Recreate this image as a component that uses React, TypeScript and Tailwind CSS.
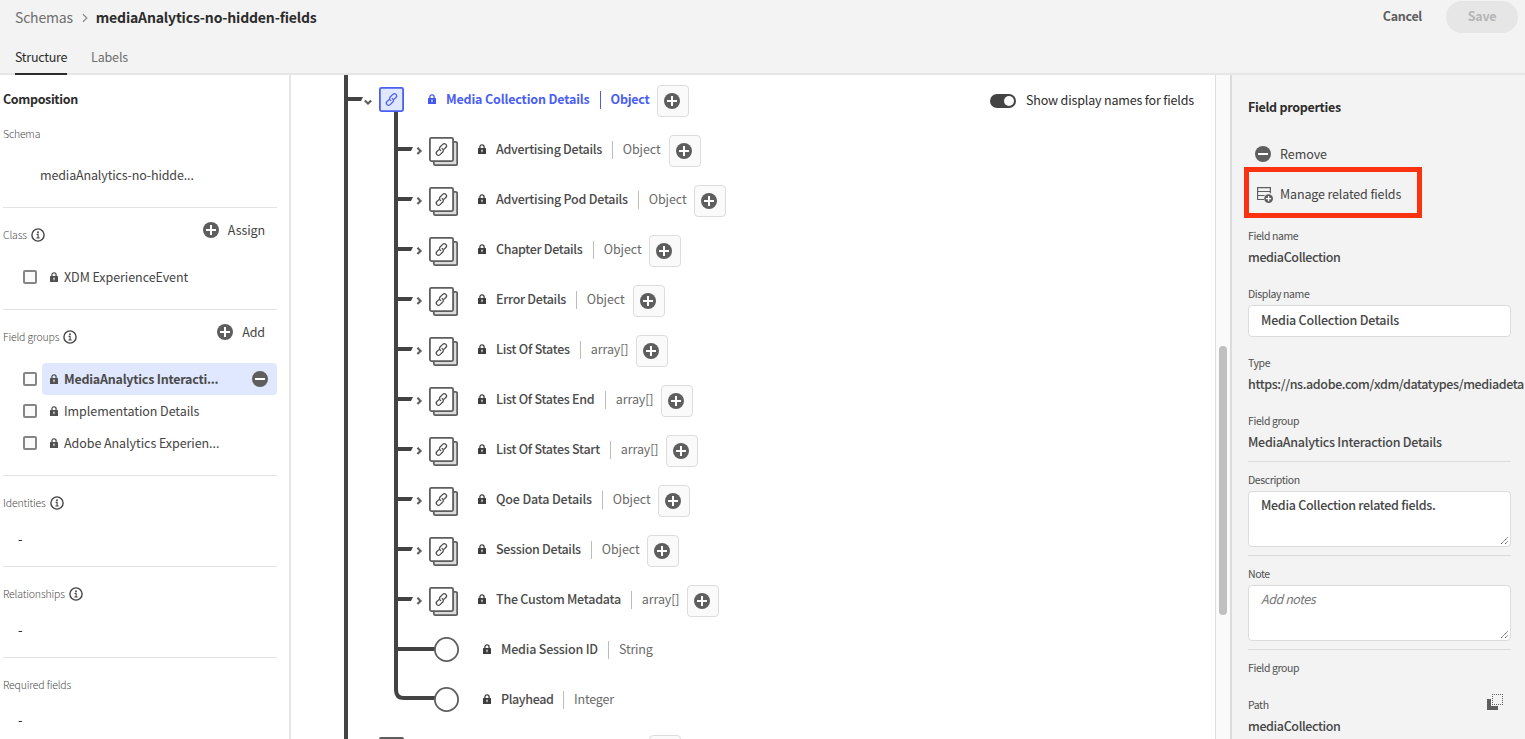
import type { ReactNode } from "react";

type NodeRow = { name: string; type: string; nameWidth: string; typeWidth: string; tracking: string };

const objectRows: NodeRow[] = [
  { name: "Advertising Details", type: "Object", nameWidth: "w-[116px]", typeWidth: "w-[57px]", tracking: "tracking-[-0.29px]" },
  { name: "Advertising Pod Details", type: "Object", nameWidth: "w-[142px]", typeWidth: "w-[56px]", tracking: "tracking-[-0.25px]" },
  { name: "Chapter Details", type: "Object", nameWidth: "w-[97px]", typeWidth: "w-[56px]", tracking: "tracking-[-0.32px]" },
  { name: "Error Details", type: "Object", nameWidth: "w-[80px]", typeWidth: "w-[57px]", tracking: "tracking-[-0.31px]" },
  { name: "List Of States", type: "array[]", nameWidth: "w-[84px]", typeWidth: "w-[56px]", tracking: "tracking-[-0.25px]" },
  { name: "List Of States End", type: "array[]", nameWidth: "w-[109px]", typeWidth: "w-[56px]", tracking: "tracking-[-0.27px]" },
  { name: "List Of States Start", type: "array[]", nameWidth: "w-[114px]", typeWidth: "w-[56px]", tracking: "tracking-[-0.27px]" },
  { name: "Qoe Data Details", type: "Object", nameWidth: "w-[106px]", typeWidth: "w-[56px]", tracking: "tracking-[-0.15px]" },
  { name: "Session Details", type: "Object", nameWidth: "w-[95px]", typeWidth: "w-[56px]", tracking: "tracking-[-0.31px]" },
  { name: "The Custom Metadata", type: "array[]", nameWidth: "w-[135px]", typeWidth: "w-[56px]", tracking: "tracking-[-0.25px]" },
];

const leafRows = [
  { name: "Media Session ID", type: "String", nameWidth: "w-[107px]", tracking: "tracking-[-0.2px]", last: false },
  { name: "Playhead", type: "Integer", nameWidth: "w-[62px]", tracking: "tracking-[-0.38px]", last: true },
];

function Lock({ className = "" }: { className?: string }) {
  return (
    <svg className={`h-[10px] w-[8px] shrink-0 ${className}`} viewBox="0 0 8 10">
      <path d="M1.9 4.5V2.9a2.1 2.1 0 0 1 4.2 0v1.6" fill="none" stroke="currentColor" strokeWidth="1.3" />
      <rect x="0" y="4" width="8" height="6" rx="0.6" fill="currentColor" />
      <path d="M4 5.4a.8.8 0 0 1 .45 1.45V8.2h-.9V6.85A.8.8 0 0 1 4 5.4z" fill="#fff" />
    </svg>
  );
}

function PlusCircle() {
  return (
    <svg className="h-4 w-4 shrink-0" viewBox="0 0 16 16">
      <circle cx="8" cy="8" r="8" fill="#5e5e5e" />
      <path d="M8 3v10M3 8h10" stroke="#fff" strokeWidth="2" />
    </svg>
  );
}

function MinusCircle() {
  return (
    <svg className="h-4 w-4 shrink-0" viewBox="0 0 16 16">
      <circle cx="8" cy="8" r="8" fill="#5e5e5e" />
      <path d="M3 8h10" stroke="#fff" strokeWidth="2" />
    </svg>
  );
}

function Info() {
  return (
    <svg className="h-[14px] w-[14px] shrink-0" viewBox="0 0 14 14">
      <circle cx="7" cy="7" r="6.1" fill="none" stroke="#444" strokeWidth="1.4" />
      <circle cx="7" cy="4.3" r="0.95" fill="#444" />
      <path d="M5.6 6.4h1.5v3.4M5.4 10h3.3" fill="none" stroke="#444" strokeWidth="1.1" />
    </svg>
  );
}

/* Chain glyph centred on (x, y) inside a tree icon. */
function Chain({ x, y, color }: { x: number; y: number; color: string }) {
  return (
    <g transform={`translate(${x} ${y}) rotate(-45)`} fill="none" stroke={color} strokeWidth="1.25" strokeLinecap="round">
      <path d="M-1.6 -2.2H-4.4a2.2 2.2 0 0 0 0 4.4H-0.6a2.2 2.2 0 0 0 2-2.9" transform="translate(-0.2 0.5)" />
      <path d="M1.6 2.2H4.4a2.2 2.2 0 0 0 0-4.4H0.6a2.2 2.2 0 0 0-2 2.9" transform="translate(0.2 -0.5)" />
    </g>
  );
}

function AddButton() {
  return (
    <button className="mt-[2px] flex h-8 w-8 shrink-0 items-center rounded-[4px] border border-[#dcdcdc] bg-[#fafafa] pl-[6px]">
      <PlusCircle />
    </button>
  );
}

function Checkbox() {
  return <span className="h-[14px] w-[14px] shrink-0 rounded-[2px] border-2 border-[#868686] bg-[#fafafa]" />;
}

function ObjectNode({ row }: { row: NodeRow }) {
  return (
    <div className="flex h-[50px] items-center">
      <svg className="h-[50px] w-[64px] shrink-0" viewBox="0 0 64 50">
        <path d="M0 0h4v50H0z" fill="#434343" />
        <path d="M4 22h15l-2 4H4z" fill="#434343" />
        <path d="M23.4 22.7l3.2 3.2-3.2 3.2" fill="none" stroke="#5e5e5e" strokeWidth="2.1" />
        <rect x="39.8" y="16.8" width="23.4" height="23.4" rx="1.5" fill="#dcdcdc" stroke="#5e5e5e" strokeWidth="1.8" />
        <rect x="35.9" y="12.9" width="23.2" height="23.2" rx="1.5" fill="#fff" stroke="#5e5e5e" strokeWidth="1.8" />
        <Chain x={47.4} y={24.5} color="#4b4b4b" />
      </svg>
      <Lock className="mb-[2px] ml-5 text-[#3c3c3c]" />
      <span className={`ml-[10px] mb-[3px] shrink-0 font-medium text-[#4b4b4b] ${row.nameWidth} ${row.tracking}`}>{row.name}</span>
      <span className={`flex h-[18px] shrink-0 items-center border-l border-[#bcbcbc] pl-[9.8px] text-[#6a6a6a] tracking-[-0.1px] ${row.typeWidth}`}>
        <span className="mb-[3px]">{row.type}</span>
      </span>
      <AddButton />
    </div>
  );
}

function LeafNode({ row }: { row: (typeof leafRows)[number] }) {
  return (
    <div className="flex h-[50px] items-center">
      <svg className="h-[50px] w-[66px] shrink-0" viewBox="0 0 66 50">
        {row.last ? (
          <path d="M2 0v15q0 8 8 8h31" fill="none" stroke="#434343" strokeWidth="4" />
        ) : (
          <path d="M2 0v50M2 24h39" fill="none" stroke="#434343" strokeWidth="4" />
        )}
        <circle cx="52.5" cy="24.5" r="11.6" fill="#fff" stroke="#5e5e5e" strokeWidth="1.8" />
      </svg>
      <Lock className="mb-[2px] ml-[23px] text-[#3c3c3c]" />
      <span className={`mb-[3px] ml-[10px] shrink-0 font-medium text-[#4b4b4b] ${row.nameWidth} ${row.tracking}`}>{row.name}</span>
      <span className="flex h-[18px] items-center border-l border-[#bcbcbc] pl-[10px] tracking-[-0.2px] text-[#6a6a6a]">
        <span className="mb-[3px]">{row.type}</span>
      </span>
    </div>
  );
}

function Section({ title, info, action, children }: { title: string; info?: boolean; action?: string; children: ReactNode }) {
  return (
    <section className="border-t border-[#e3e3e3]">
      <div className="flex h-[53px] items-center justify-between pr-3">
        <h3 className="flex items-center gap-[4px] text-[10.5px] font-light tracking-[-0.16px] text-[#4b4b4b]">
          {title}
          {info && <Info />}
        </h3>
        {action && (
          <button className="mb-[10px] flex items-center gap-[9px] tracking-[-0.1px] text-[#444]">
            <PlusCircle />
            {action}
          </button>
        )}
      </div>
      {children}
    </section>
  );
}

function CompositionItem({ name, selected }: { name: string; selected?: boolean }) {
  return (
    <div className="flex h-8 items-center pl-5">
      <Checkbox />
      <div
        className={
          selected
            ? "ml-[5px] flex h-8 flex-1 items-center gap-[6px] rounded-[4px] bg-[#e0e8ff] pl-2 pr-[9px] font-bold tracking-[-0.24px] text-[#4b4b4b]"
            : "ml-[5px] flex h-8 flex-1 items-center gap-[6px] pl-2 tracking-[-0.06px] text-[#444]"
        }
      >
        <Lock className="text-[#505050]" />
        <span className="mb-px flex-1">{name}</span>
        {selected && <MinusCircle />}
      </div>
    </div>
  );
}

const label = "block text-[10.5px] leading-4 tracking-[-0.4px] text-[#505050]";
const value = "block whitespace-nowrap font-medium leading-5 text-[#464646]";

function Grip() {
  return (
    <svg className="h-[9px] w-[9px]" viewBox="0 0 9 9">
      <path d="M1 8l7-7M5 8l3-3" stroke="#555" strokeWidth="1" strokeDasharray="1.4 0.5" />
    </svg>
  );
}

export default function App() {
  return (
    <div className="flex h-[739px] w-[1525px] flex-col overflow-hidden bg-white font-['Noto_Sans_CJK_SC','Open_Sans',sans-serif] text-[12.5px] leading-5 text-[#2c2c2c]">
      <header className="flex h-[75px] shrink-0 flex-col border-b-2 border-[#e6e6e6] bg-[#f3f3f3]">
        <div className="flex h-[34px] shrink-0 items-center pl-[15px] pr-[7px] text-[14px]">
          <span className="tracking-[-0.2px] text-[#6e6e6e]">Schemas</span>
          <svg className="ml-[9px] mr-2 mt-[2px] h-[10px] w-[6px]" viewBox="0 0 6 10">
            <path d="M1 1.2L4.8 5 1 8.8" fill="none" stroke="#8e8e8e" strokeWidth="1.3" />
          </svg>
          <h1 className="flex-1 font-bold tracking-[-0.17px]">mediaAnalytics-no-hidden-fields</h1>
          <button className="mb-[2px] text-[12.5px] font-bold tracking-[-0.3px] text-[#5e5e5e]">Cancel</button>
          <button className="ml-6 flex h-8 w-[72px] items-center justify-center rounded-full bg-[#e6e6e6] pb-[2px] text-[12.5px] font-bold tracking-[-0.3px] text-[#b5b5b5]">
            Save
          </button>
        </div>
        <nav className="flex h-[41px] shrink-0 gap-6 pl-[15px]">
          <span className="z-10 h-[41px] w-[52px] border-b-2 border-[#2c2c2c] pt-[13px] tracking-[-0.25px] text-[#2c2c2c]">Structure</span>
          <span className="pt-[13px] tracking-[-0.15px] text-[#6e6e6e]">Labels</span>
        </nav>
      </header>

      <div className="flex min-h-0 flex-1">
        <aside className="w-[291px] shrink-0 overflow-hidden border-r-2 border-[#e6e6e6] pl-[3px] pr-3">
          <div className="flex h-[132px] flex-col">
            <h2 className="mt-[14px] font-bold tracking-[-0.36px]">Composition</h2>
            <h3 className="mt-4 text-[10.5px] font-light leading-[18px] tracking-[-0.2px] text-[#4b4b4b]">Schema</h3>
            <p className="ml-[37px] mt-[22px] tracking-[-0.14px] text-[#444]">mediaAnalytics-no-hidde...</p>
          </div>
          <Section title="Class" info action="Assign">
            <div className="h-12">
              <CompositionItem name="XDM ExperienceEvent" />
            </div>
          </Section>
          <Section title="Field groups" info action="Add">
            <div className="h-28">
              <CompositionItem name="MediaAnalytics Interacti..." selected />
              <CompositionItem name="Implementation Details" />
              <CompositionItem name="Adobe Analytics Experien..." />
            </div>
          </Section>
          <Section title="Identities" info>
            <p className="h-[37px] pl-[15px] font-medium">-</p>
          </Section>
          <Section title="Relationships" info>
            <p className="h-[37px] pl-[15px] font-medium">-</p>
          </Section>
          <Section title="Required fields">
            <p className="-mt-px pl-[15px] font-medium">-</p>
          </Section>
        </aside>

        <main className="flex min-w-0 flex-1 overflow-hidden pl-[53px]">
          <div className="w-1 shrink-0 bg-[#434343]" />
          <div className="w-[642px] shrink-0">
            <div className="flex h-[50px] items-center">
              <svg className="h-[50px] w-[56px] shrink-0" viewBox="0 0 56 50">
                <path d="M0 22h15l-2 4H0z" fill="#434343" />
                <path d="M16.8 25.4l3.2 3.2 3.2-3.2" fill="none" stroke="#5e5e5e" strokeWidth="2.1" />
                <path d="M46 36h4v14h-4z" fill="#434343" />
                <rect x="31.9" y="12.9" width="23.2" height="23.2" rx="1.5" fill="#e0e8ff" stroke="#4b5ef2" strokeWidth="1.8" />
                <Chain x={43.5} y={24.5} color="#4b5ef2" />
              </svg>
              <Lock className="mb-[2px] ml-6 text-[#4256f0]" />
              <span className="mb-[3px] ml-[10px] w-[154px] shrink-0 font-bold tracking-[-0.17px] text-[#4b5ef2]">Media Collection Details</span>
              <span className="flex h-[18px] w-[57px] shrink-0 items-center border-l border-[#4b5ef2] pl-[9.5px] font-bold tracking-[-0.25px] text-[#4b5ef2]">
                <span className="mb-[3px]">Object</span>
              </span>
              <AddButton />
            </div>
            <div className="pl-[46px]">
              {objectRows.map((row) => (
                <ObjectNode key={row.name} row={row} />
              ))}
              {leafRows.map((row) => (
                <LeafNode key={row.name} row={row} />
              ))}
            </div>
            <div className="flex h-[50px] pl-[31px] pt-[10px]">
              <span className="mt-[2px] h-[25px] w-[25px] rounded-[2px] border-2 border-[#5e5e5e] bg-[#5e5e5e]" />
              <span className="ml-[245px] h-8 w-8 rounded-[4px] border border-[#dcdcdc] bg-[#fafafa]" />
            </div>
          </div>
          <label className="mt-[15px] flex h-5 items-center whitespace-nowrap tracking-[-0.16px]">
            <span className="mt-[2px] flex h-[14px] w-[26px] items-center justify-end rounded-full bg-[#434343] pr-[2px]">
              <span className="h-[10px] w-[10px] rounded-full bg-[#fafafa]" />
            </span>
            <span className="ml-[10px]">Show display names for fields</span>
          </label>
        </main>

        <div className="flex w-[17px] shrink-0 justify-center border-l border-r-2 border-l-[#dedede] border-r-[#dcdcdc] bg-[#fafafa]">
          <div className="mt-[271px] h-[269px] w-2 rounded-full bg-[#c0c0c0]" />
        </div>

        <aside className="w-[293px] shrink-0 overflow-hidden bg-[#f3f3f3] pl-4">
          <h2 className="mt-[22px] font-bold tracking-[-0.3px]">Field properties</h2>
          <button className="ml-[7px] mt-[25px] flex h-6 items-center gap-[9px] tracking-[-0.05px] text-[#444]">
            <MinusCircle />
            Remove
          </button>
          <div className="-ml-[4px] mt-px flex h-[51px] w-[178px] items-center gap-[7px] border-[5px] border-[#fa320f] pl-[8px] tracking-[-0.14px] text-[#444]">
            <svg className="mt-1 h-4 w-4 shrink-0" viewBox="0 0 16 16">
              <path d="M7 12.5H.6V.6h12.8v5.6M.6 4.5h12.8M.6 8.5h7" fill="none" stroke="#5e5e5e" strokeWidth="1.2" />
              <circle cx="11.6" cy="11.6" r="4.4" fill="#5e5e5e" />
              <path d="M11.6 9v5.2M9 11.6h5.2" stroke="#fff" strokeWidth="1.3" />
            </svg>
            <span className="mt-[2px]">Manage related fields</span>
          </div>
          <span className={`${label} mt-[10px]`}>Field name</span>
          <span className={`${value} mt-[3px] tracking-[-0.38px]`}>mediaCollection</span>
          <span className={`${label} mt-[19px]`}>Display name</span>
          <div className="mt-[3px] flex h-8 w-[263px] items-center rounded-[4px] border border-[#dcdcdc] bg-white pb-[2px] pl-3">
            <span className={`${value} tracking-[-0.22px]`}>Media Collection Details</span>
          </div>
          <span className={`${label} mt-[18px]`}>Type</span>
          <span className={`${value} mt-[3px] tracking-[-0.38px]`}>https://ns.adobe.com/xdm/datatypes/mediadeta</span>
          <span className={`${label} mt-[19px]`}>Field group</span>
          <span className={`${value} mt-[3px] tracking-[-0.26px]`}>MediaAnalytics Interaction Details</span>
          <hr className="mt-[9px] w-[263px] border-[#dcdcdc]" />
          <span className={`${label} mt-[10px]`}>Description</span>
          <div className="mt-[3px] flex h-14 w-[263px] items-end justify-between rounded-[4px] border border-[#dcdcdc] bg-white pb-[1px] pl-3 pr-[1px]">
            <span className={`${value} self-start pt-[3px] tracking-[-0.3px]`}>Media Collection related fields.</span>
            <Grip />
          </div>
          <hr className="mt-2 w-[263px] border-[#dcdcdc]" />
          <span className={`${label} mt-[10px]`}>Note</span>
          <div className="mt-[3px] flex h-14 w-[263px] items-end justify-between rounded-[4px] border border-[#dcdcdc] bg-white pb-[1px] pl-3 pr-[1px]">
            <span className="self-start pt-[3px] italic tracking-[-0.44px] text-[#777]">Add notes</span>
            <Grip />
          </div>
          <hr className="mt-2 w-[263px] border-[#dcdcdc]" />
          <span className={`${label} mt-[10px]`}>Field group</span>
          <div className="mt-[18px] flex w-[255px] items-start justify-between">
            <span className={`${label} mt-[3px]`}>Path</span>
            <svg className="h-4 w-4" viewBox="0 0 16 16">
              <path d="M0 5h4v7h7v4H0z" fill="#5e5e5e" />
              <path d="M5 .5h11M5 10.5h11M5.5 2v8M15.5 2v8" fill="none" stroke="#5e5e5e" strokeWidth="1" strokeDasharray="1 1" />
            </svg>
          </div>
          <span className={`${value} mt-[3px] tracking-[-0.38px]`}>mediaCollection</span>
        </aside>
      </div>
    </div>
  );
}
